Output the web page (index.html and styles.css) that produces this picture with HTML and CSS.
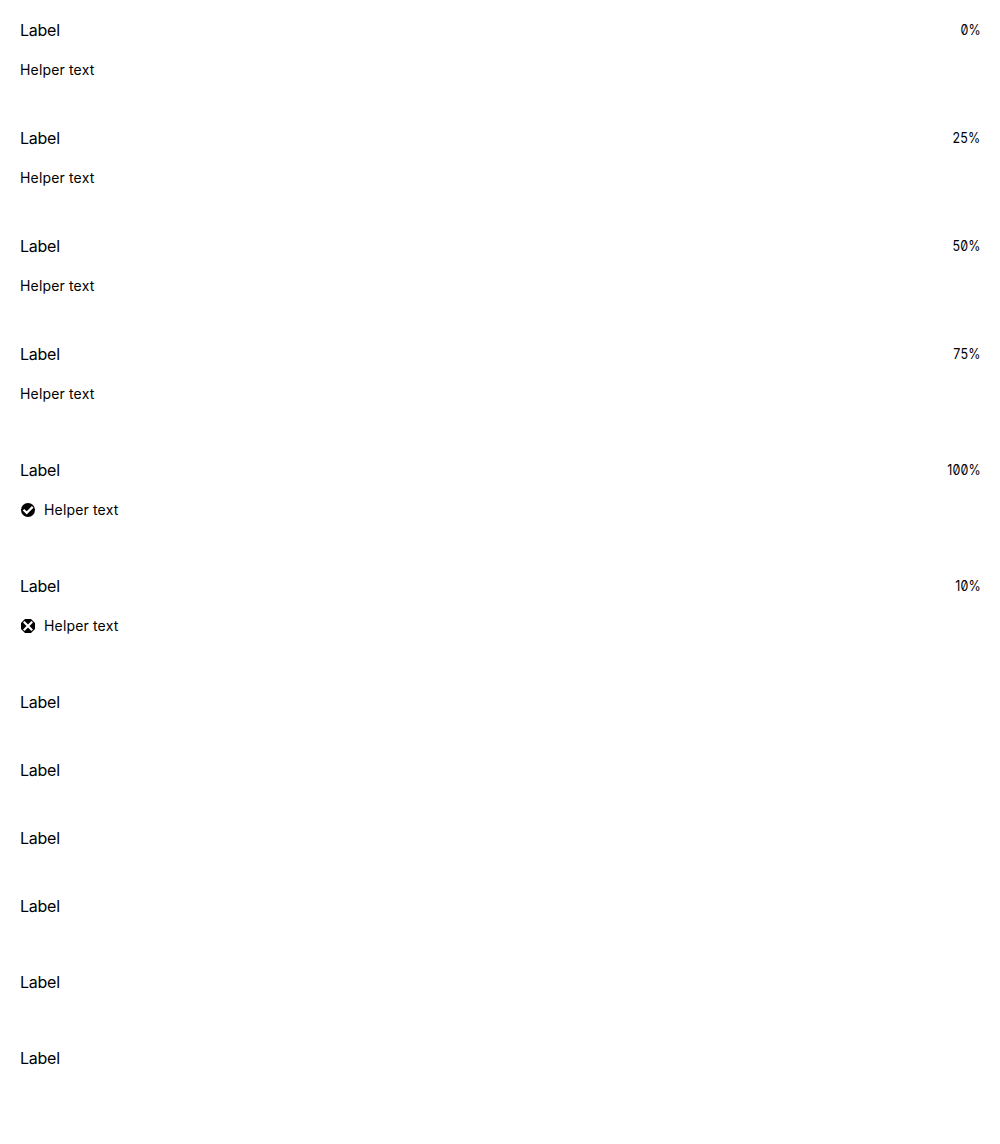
FILE: index.html
```html
<!DOCTYPE html>
<html lang="en">
<head>
<meta charset="utf-8">
<title>Progress</title>
<link rel="stylesheet" href="styles.css">
</head>
<body>
<main class="list">
<section class="item"><div class="top"><span class="label">Label</span><span class="value">0%</span></div><div class="helper">Helper text</div></section>
<section class="item"><div class="top"><span class="label">Label</span><span class="value">25%</span></div><div class="helper">Helper text</div></section>
<section class="item"><div class="top"><span class="label">Label</span><span class="value">50%</span></div><div class="helper">Helper text</div></section>
<section class="item item-last"><div class="top"><span class="label">Label</span><span class="value">75%</span></div><div class="helper">Helper text</div></section>
<section class="item item-last"><div class="top"><span class="label">Label</span><span class="value">100%</span></div><div class="helper"><svg class="icon" viewBox="0 0 16 16"><circle cx="8" cy="8" r="7"/><path class="mark" d="M3.5 7.8 6.7 10.9 12.7 4.9"/></svg>Helper text</div></section>
<section class="item item-last"><div class="top"><span class="label">Label</span><span class="value">10%</span></div><div class="helper"><svg class="icon" viewBox="0 0 16 16"><path d="M5 1h6l4 4v6l-4 4H5l-4-4V5z"/><path class="mark" d="M3.8 3.8l8.4 8.4M12.2 3.8l-8.4 8.4"/></svg>Helper text</div></section>
<section class="simple"><span class="label">Label</span></section>
<section class="simple"><span class="label">Label</span></section>
<section class="simple"><span class="label">Label</span></section>
<section class="simple simple-last"><span class="label">Label</span></section>
<section class="simple simple-last"><span class="label">Label</span></section>
<section class="simple"><span class="label">Label</span></section>
</main>
</body>
</html>
```
FILE: styles.css
```css
body { margin: 0; background: #fff; color: #000; font-family: Inter, sans-serif; font-weight: 400; }
.list { padding: 18px 20px; }
.item { height: 108px; }
.item-last { height: 116px; }
.top { display: flex; justify-content: space-between; height: 24px; }
.label { font-size: 16px; line-height: 24px; letter-spacing: -.25px; }
.value { font-size: 14px; line-height: 24px; font-feature-settings: "zero"; letter-spacing: .2px; margin-right: -.6px; transform: scaleX(.89); transform-origin: right; }
.helper { display: flex; align-items: center; gap: 8px; margin-top: 18px; font-size: 14px; line-height: 20px; letter-spacing: .16px; }
.icon { width: 16px; height: 16px; }
.mark { fill: none; stroke: #fff; stroke-width: 2.2; }
.simple { height: 68px; }
.simple-last { height: 76px; }
```
